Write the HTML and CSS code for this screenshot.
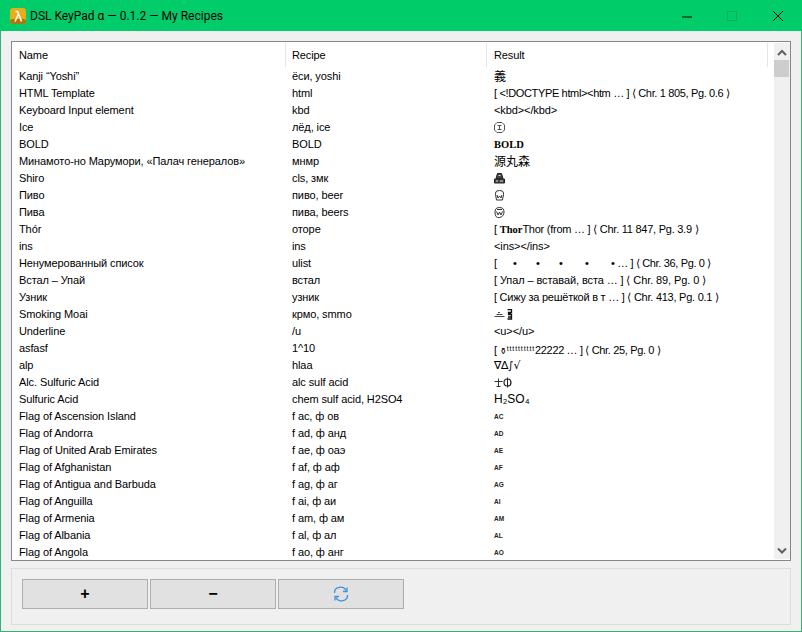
FILE: index.html
```html
<!DOCTYPE html>
<html lang="en">
<head>
<meta charset="utf-8">
<title>DSL KeyPad α — 0.1.2 — My Recipes</title>
<link rel="stylesheet" href="styles.css">
</head>
<body>
<div class="window">
  <header class="titlebar">
    <svg class="app-icon" width="16" height="16" viewBox="0 0 16 16"><rect width="16" height="16" rx="3" fill="#e6ae18"/><rect y="11" width="16" height="5" rx="2.500" fill="#ab7a0a"/><path d="M5 13.500 8.500 6 7.500 3.500H5.500M8.500 6 11.500 13.500" fill="none" stroke="#fff" stroke-width="1.500"/></svg>
    <span class="title">DSL KeyPad α — 0.1.2 — My Recipes</span>
    <div class="caption">
      <svg class="cap" width="46" height="30" viewBox="0 0 46 30"><path d="M18 16h10" stroke="#000"/></svg>
      <svg class="cap" width="46" height="30" viewBox="0 0 46 30"><rect x="17.500" y="10.500" width="9" height="9" fill="none" stroke="#0fa85c"/></svg>
      <svg class="cap" width="46" height="30" viewBox="0 0 46 30"><path d="M17 10l10 10M27 10 17 20" stroke="#000" fill="none"/></svg>
    </div>
  </header>
  <main class="client">
    <section class="list">
      <div class="viewport">
        <div class="row head"><div class="c name">Name</div><div class="c recipe">Recipe</div><div class="c result">Result</div><div class="c tail"></div></div>
        <div class="rows">
          <div class="row"><div class="c">Kanji “Yoshi”</div><div class="c">ёси, yoshi</div><div class="c cjk">義</div></div>
          <div class="row"><div class="c">HTML Template</div><div class="c">html</div><div class="c tight">[ &lt;!DOCTYPE html&gt;&lt;htm … ] ⟨ Chr. 1 805, Pg. 0.6 ⟩</div></div>
          <div class="row"><div class="c">Keyboard Input element</div><div class="c">kbd</div><div class="c">&lt;kbd&gt;&lt;/kbd&gt;</div></div>
          <div class="row"><div class="c">Ice</div><div class="c">лёд, ice</div><div class="c"><svg class="glyph" width="11" height="11" viewBox="0 0 11 11"><path d="M3 .5H8L10.500 3V8L8 10.500H3L.5 8V3ZM3.500 3.500h4M5.500 3.500v4M3.500 7.500h4" fill="none" stroke="#555"/></svg></div></div>
          <div class="row"><div class="c">BOLD</div><div class="c">BOLD</div><div class="c serif-bold">BOLD</div></div>
          <div class="row"><div class="c">Минамото-но Марумори, «Палач генералов»</div><div class="c">мнмр</div><div class="c cjk">源丸森</div></div>
          <div class="row"><div class="c">Shiro</div><div class="c">cls, змк</div><div class="c"><svg class="glyph" width="11" height="11" viewBox="0 0 11 11"><path d="M3.500.5h4L9 5.500H2ZM.5 6h10v4H.5Z" fill="#444" stroke="#222"/><path d="M2 8h2M6 8h3M4.500 2.500h2" stroke="#ddd"/></svg></div></div>
          <div class="row"><div class="c">Пиво</div><div class="c">пиво, beer</div><div class="c"><svg class="glyph" width="11" height="11" viewBox="0 0 11 11"><path d="M1.500 4.500V3Q1.500.5 5.500.5T9.500 3V4.500L8.500 10H2.500ZM3 5 4 8 5.500 6 7 8 8 5" fill="none" stroke="#333"/></svg></div></div>
          <div class="row"><div class="c">Пива</div><div class="c">пива, beers</div><div class="c"><svg class="glyph" width="11" height="11" viewBox="0 0 11 11"><path d="M1 5Q1 .5 5.500.5T10 5 5.500 10.500 1 5ZM2.500 4.500 4 8 5.500 5 7 8 8.500 4.500M3 2.500h5" fill="none" stroke="#333"/></svg></div></div>
          <div class="row"><div class="c">Thór</div><div class="c">оторе</div><div class="c snug">[ <span class="serif-bold">Thor</span>Thor (from … ] ⟨ Chr. 11 847, Pg. 3.9 ⟩</div></div>
          <div class="row"><div class="c">ins</div><div class="c">ins</div><div class="c">&lt;ins&gt;&lt;/ins&gt;</div></div>
          <div class="row"><div class="c">Ненумерованный список</div><div class="c">ulist</div><div class="c tight">[ <span class="bul first">•</span><span class="bul">•</span><span class="bul">•</span><span class="bul wide">•</span><span class="bul wide">•</span> … ] ⟨ Chr. 36, Pg. 0 ⟩</div></div>
          <div class="row"><div class="c">Встал – Упай</div><div class="c">встал</div><div class="c">[ Упал – вставай, вста … ] ⟨ Chr. 89, Pg. 0 ⟩</div></div>
          <div class="row"><div class="c">Узник</div><div class="c">узник</div><div class="c snug">[ Сижу за решёткой в т … ] ⟨ Chr. 413, Pg. 0.1 ⟩</div></div>
          <div class="row"><div class="c">Smoking Moai</div><div class="c">кpмо, smmo</div><div class="c"><svg class="glyph" width="20" height="11" viewBox="0 0 20 11"><path d="M.5 7.500h10M2.500 5.500h6M4 3.500h2" stroke="#444"/><path d="M13.500 .5h4v3h-3v2h3v4.500h-4M14 4.500h3M14 8h4" fill="none" stroke="#111" stroke-width="1.300"/></svg></div></div>
          <div class="row"><div class="c">Underline</div><div class="c">/u</div><div class="c">&lt;u&gt;&lt;/u&gt;</div></div>
          <div class="row"><div class="c">asfasf</div><div class="c">1^10</div><div class="c tight">[ <span class="sm">⚱</span><span class="tiny">tttttttttt</span>22222 … ] ⟨ Chr. 25, Pg. 0 ⟩</div></div>
          <div class="row"><div class="c">alp</div><div class="c">hlaa</div><div class="c sym">∇∆∫√</div></div>
          <div class="row"><div class="c">Alc. Sulfuric Acid</div><div class="c">alc sulf acid</div><div class="c"><svg class="glyph" width="20" height="11" viewBox="0 0 20 11"><path d="M.5 4.500h8M4.500 1.500v8M2.500 9.500h4" fill="none" stroke="#333"/><circle cx="13.500" cy="5.500" r="3.500" fill="none" stroke="#222" stroke-width="1.200"/><path d="M13.500 .5v10" stroke="#222"/></svg></div></div>
          <div class="row"><div class="c">Sulfuric Acid</div><div class="c">chem sulf acid, H2SO4</div><div class="c math">H₂SO₄</div></div>
          <div class="row"><div class="c">Flag of Ascension Island</div><div class="c">f ac, ф ов</div><div class="c code">AC</div></div>
          <div class="row"><div class="c">Flag of Andorra</div><div class="c">f ad, ф анд</div><div class="c code">AD</div></div>
          <div class="row"><div class="c">Flag of United Arab Emirates</div><div class="c">f ae, ф оаэ</div><div class="c code">AE</div></div>
          <div class="row"><div class="c">Flag of Afghanistan</div><div class="c">f af, ф аф</div><div class="c code">AF</div></div>
          <div class="row"><div class="c">Flag of Antigua and Barbuda</div><div class="c">f ag, ф аг</div><div class="c code">AG</div></div>
          <div class="row"><div class="c">Flag of Anguilla</div><div class="c">f ai, ф аи</div><div class="c code">AI</div></div>
          <div class="row"><div class="c">Flag of Armenia</div><div class="c">f am, ф ам</div><div class="c code">AM</div></div>
          <div class="row"><div class="c">Flag of Albania</div><div class="c">f al, ф ал</div><div class="c code">AL</div></div>
          <div class="row"><div class="c">Flag of Angola</div><div class="c">f ao, ф анг</div><div class="c code">AO</div></div>
        </div>
      </div>
      <div class="scrollbar">
        <svg width="17" height="17" viewBox="0 0 17 17"><path d="M4 12 8 8 12 12" fill="none" stroke="#606060" stroke-width="2"/></svg>
        <div class="track"><div class="thumb"></div></div>
        <svg width="17" height="17" viewBox="0 0 17 17"><path d="M4 6.500 8 10.500 12 6.500" fill="none" stroke="#606060" stroke-width="2"/></svg>
      </div>
    </section>
    <section class="actions">
      <button class="btn sign" type="button">+</button>
      <button class="btn sign" type="button">−</button>
      <button class="btn" type="button" aria-label="Refresh"><svg width="16" height="16" viewBox="0 0 16 16"><path d="M1.500 7A6 5.500 0 0 1 13 4.500M14.500 9A6 5.500 0 0 1 3 11.500" fill="none" stroke="#3f8fdc" stroke-width="1.300"/><path d="M14 1.500V5.500H10M2 14.500V10.500H6" fill="none" stroke="#3f8fdc" stroke-width="1.300"/></svg></button>
    </section>
  </main>
</div>
</body>
</html>
```
FILE: styles.css
```css
* { box-sizing: border-box; }
html, body { margin: 0; height: 100%; }
body { font-family: "Liberation Sans", Arial, sans-serif; font-size: 11px; letter-spacing: -.1px; color: #000; overflow: hidden; }
.window { width: 802px; height: 632px; display: flex; flex-direction: column; border: 1px solid #2fb377; border-top: 0; background: #f0f0f0; }
.titlebar { height: 31px; margin: 0 -1px; display: flex; align-items: center; padding-left: 10px; background: #00cc6a; flex: none; }
.app-icon { flex: none; margin-right: 4px; }
.title { font-family: Roboto, sans-serif; font-size: 12px; letter-spacing: 0; color: #000; }
.caption { margin-left: auto; display: flex; height: 30px; }
.cap { display: block; width: 46px; }
.client { flex: 1; display: flex; flex-direction: column; padding: 10px 10px 6px; gap: 7px; }
.list { height: 520px; flex: none; display: flex; border: 1px solid #828790; background: #fff; overflow: hidden; }
.viewport { flex: 1; min-width: 0; overflow: hidden; }
.row { display: grid; grid-template-columns: 274px 201px 1fr; height: 17px; align-items: center; }
.c { padding-left: 7px; white-space: nowrap; overflow: hidden; line-height: 17px; height: 17px; }
.c:nth-child(2) { padding-left: 6px; }
.head { height: 26px; grid-template-columns: 274px 201px 281px 1fr; align-items: start; }
.head .c { height: 24px; margin-top: 1px; line-height: 25px; border-right: 1px solid #e5e5e5; }
.head .tail { border-right: 0; }
.tight { letter-spacing: -.35px; }
.snug { letter-spacing: -.25px; }
.scrollbar { width: 17px; flex: none; display: flex; flex-direction: column; margin: 1px 0; background: #f0f0f0; border-left: 1px solid #fff; }
.scrollbar svg { display: block; flex: none; }
.track { flex: 1; }
.thumb { height: 17px; width: 15px; background: #cdcdcd; }
.glyph { display: block; margin-top: 3px; }
.cjk { font-family: "Noto Sans CJK JP", sans-serif; font-size: 12px; letter-spacing: 0; line-height: 15px; }
.serif-bold { font-family: "Liberation Serif", serif; font-weight: bold; font-size: 10.5px; letter-spacing: 0; }
.code { font-size: 6.5px; font-weight: bold; letter-spacing: 0; color: #222; }
.math { font-size: 12px; letter-spacing: 0; }
.sym { font-family: "DejaVu Sans", sans-serif; font-size: 11px; letter-spacing: -.3px; }
.bul { display: inline-block; width: 23px; text-align: right; }
.bul.first { width: 17px; }
.bul.wide { width: 26px; }
.tiny { font-size: 7px; vertical-align: 3px; letter-spacing: .9px; }
.sm { font-family: "DejaVu Sans", sans-serif; font-size: 9px; }
.actions { height: 57px; flex: none; display: flex; gap: 2px; padding: 10px; border: 1px solid #dcdcdc; }
.btn { width: 126px; height: 30px; padding: 0; display: flex; align-items: center; justify-content: center; background: #e1e1e1; border: 1px solid #adadad; font: bold 16px "Liberation Sans", Arial, sans-serif; color: #000; }
```
